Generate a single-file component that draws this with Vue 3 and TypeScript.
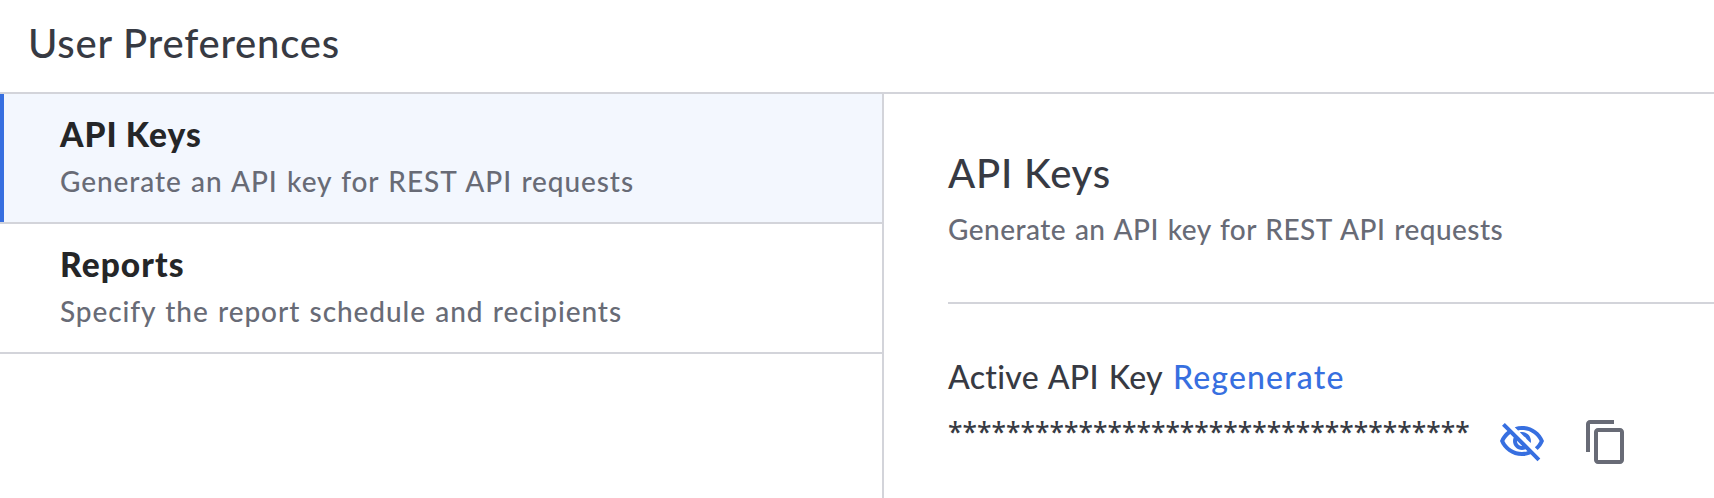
<script setup lang="ts">
import { ref, computed } from 'vue'

interface Section {
  title: string
  description: string
}

const sections: Section[] = [
  { title: 'API Keys', description: 'Generate an API key for REST API requests' },
  { title: 'Reports', description: 'Specify the report schedule and recipients' },
]

const selected = ref(0)
const current = computed(() => sections[selected.value])
const maskedKey = '*'.repeat(36)
</script>

<template>
  <div class="page">
    <header class="header">
      <h1 class="heading">User Preferences</h1>
    </header>
    <div class="body">
      <nav class="sidebar">
        <div
          v-for="(section, index) in sections"
          :key="section.title"
          class="item"
          :class="{ active: index === selected }"
          @click="selected = index"
        >
          <div class="item-title">{{ section.title }}</div>
          <div class="description">{{ section.description }}</div>
        </div>
      </nav>
      <main class="content">
        <section class="intro">
          <h2 class="heading">{{ current.title }}</h2>
          <p class="description compact">{{ current.description }}</p>
        </section>
        <div class="key-label">
          <span class="label">Active API Key</span>
          <a class="link">Regenerate</a>
        </div>
        <div class="key-row">
          <span class="key">{{ maskedKey }}</span>
          <svg class="icon eye" viewBox="0 0 24 24" aria-hidden="true">
            <path d="M12 6c3.79 0 7.17 2.13 8.82 5.5-.59 1.22-1.42 2.27-2.41 3.12l1.41 1.41c1.39-1.23 2.49-2.77 3.18-4.53C21.27 7.11 17 4 12 4c-1.27 0-2.49.2-3.64.57l1.65 1.65C10.66 6.09 11.32 6 12 6zm-1.07 1.14L13 9.21c.57.25 1.03.71 1.28 1.28l2.07 2.07c.08-.34.14-.7.14-1.07C16.5 9.01 14.48 7 12 7c-.37 0-.72.05-1.07.14zM2.01 3.87l2.68 2.68C3.06 7.83 1.77 9.53 1 11.5 2.73 15.89 7 19 12 19c1.52 0 2.98-.29 4.32-.82l3.42 3.42 1.41-1.41L3.42 2.45 2.01 3.87zm7.5 7.5l2.61 2.61c-.04.01-.08.02-.12.02-1.38 0-2.5-1.12-2.5-2.5 0-.05.01-.08.01-.13zm-3.4-3.4l1.75 1.75c-.23.55-.36 1.15-.36 1.78 0 2.48 2.02 4.5 4.5 4.5.63 0 1.23-.13 1.77-.36l.98.98c-.88.24-1.8.38-2.75.38-3.79 0-7.17-2.13-8.82-5.5.7-1.43 1.72-2.61 2.93-3.53z" />
          </svg>
          <svg class="icon copy" viewBox="0 0 24 24" aria-hidden="true">
            <path d="M16 1H4c-1.1 0-2 .9-2 2v14h2V3h12V1zm3 4H8c-1.1 0-2 .9-2 2v14c0 1.1.9 2 2 2h11c1.1 0 2-.9 2-2V7c0-1.1-.9-2-2-2zm0 16H8V7h11v14z" />
          </svg>
        </div>
      </main>
    </div>
  </div>
</template>

<style>
body {
  margin: 0;
  background: #fff;
}
</style>

<style scoped>
.page {
  box-sizing: border-box;
  display: flex;
  flex-direction: column;
  height: 100vh;
  overflow: hidden;
  background: #fff;
  color: #373a43;
  font-family: Lato, "Open Sans", sans-serif;
}
.header {
  box-sizing: border-box;
  flex: none;
  height: 94px;
  padding: 19px 28px 0;
  border-bottom: 2px solid #d3d4da;
}
.heading {
  margin: 0;
  font-size: 40px;
  font-weight: 500;
  line-height: 48px;
  letter-spacing: 0.8px;
}
.body {
  display: flex;
  flex: 1;
  min-height: 0;
}
.sidebar {
  box-sizing: border-box;
  flex: none;
  width: 884px;
  border-right: 2px solid #d3d4da;
}
.item {
  box-sizing: border-box;
  height: 130px;
  padding: 20px 60px 0;
  border-bottom: 2px solid #d3d4da;
  cursor: pointer;
}
.item.active {
  background: #f3f7fe;
  box-shadow: inset 4px 0 0 #376fe0;
}
.item-title {
  margin-bottom: 9px;
  color: #252628;
  font-size: 33.5px;
  font-weight: 900;
  line-height: 40px;
  letter-spacing: 1.05px;
  word-spacing: -1px;
}
.description {
  margin: 0;
  color: #686b76;
  font-size: 28px;
  font-weight: 500;
  line-height: 36px;
  letter-spacing: 0.92px;
  word-spacing: 1.4px;
  white-space: nowrap;
}
.description.compact {
  letter-spacing: 0.46px;
}
.content {
  flex: 1;
  min-width: 0;
  padding: 55px 0 0 64px;
}
.intro {
  display: flex;
  flex-direction: column;
  gap: 14px;
  padding-bottom: 55px;
  border-bottom: 2px solid #d3d4da;
}
.key-label {
  display: flex;
  margin-top: 53px;
  font-size: 32px;
  font-weight: 500;
  line-height: 40px;
}
.label {
  width: 225px;
  letter-spacing: 0.3px;
  word-spacing: 1.5px;
}
.link {
  color: #376fe0;
  letter-spacing: 1.15px;
  cursor: pointer;
}
.key-row {
  display: flex;
  align-items: flex-start;
  margin-top: 15px;
}
.key {
  width: 550px;
  font-family: "Noto Sans", sans-serif;
  font-size: 26.4px;
  font-weight: 500;
  line-height: 40px;
  letter-spacing: 0.03px;
}
.icon {
  flex: none;
  width: 48px;
  height: 48px;
  margin-top: 6px;
  cursor: pointer;
}
.eye {
  margin-right: 36px;
  fill: #376fe0;
}
.copy {
  fill: #686b76;
}
</style>
